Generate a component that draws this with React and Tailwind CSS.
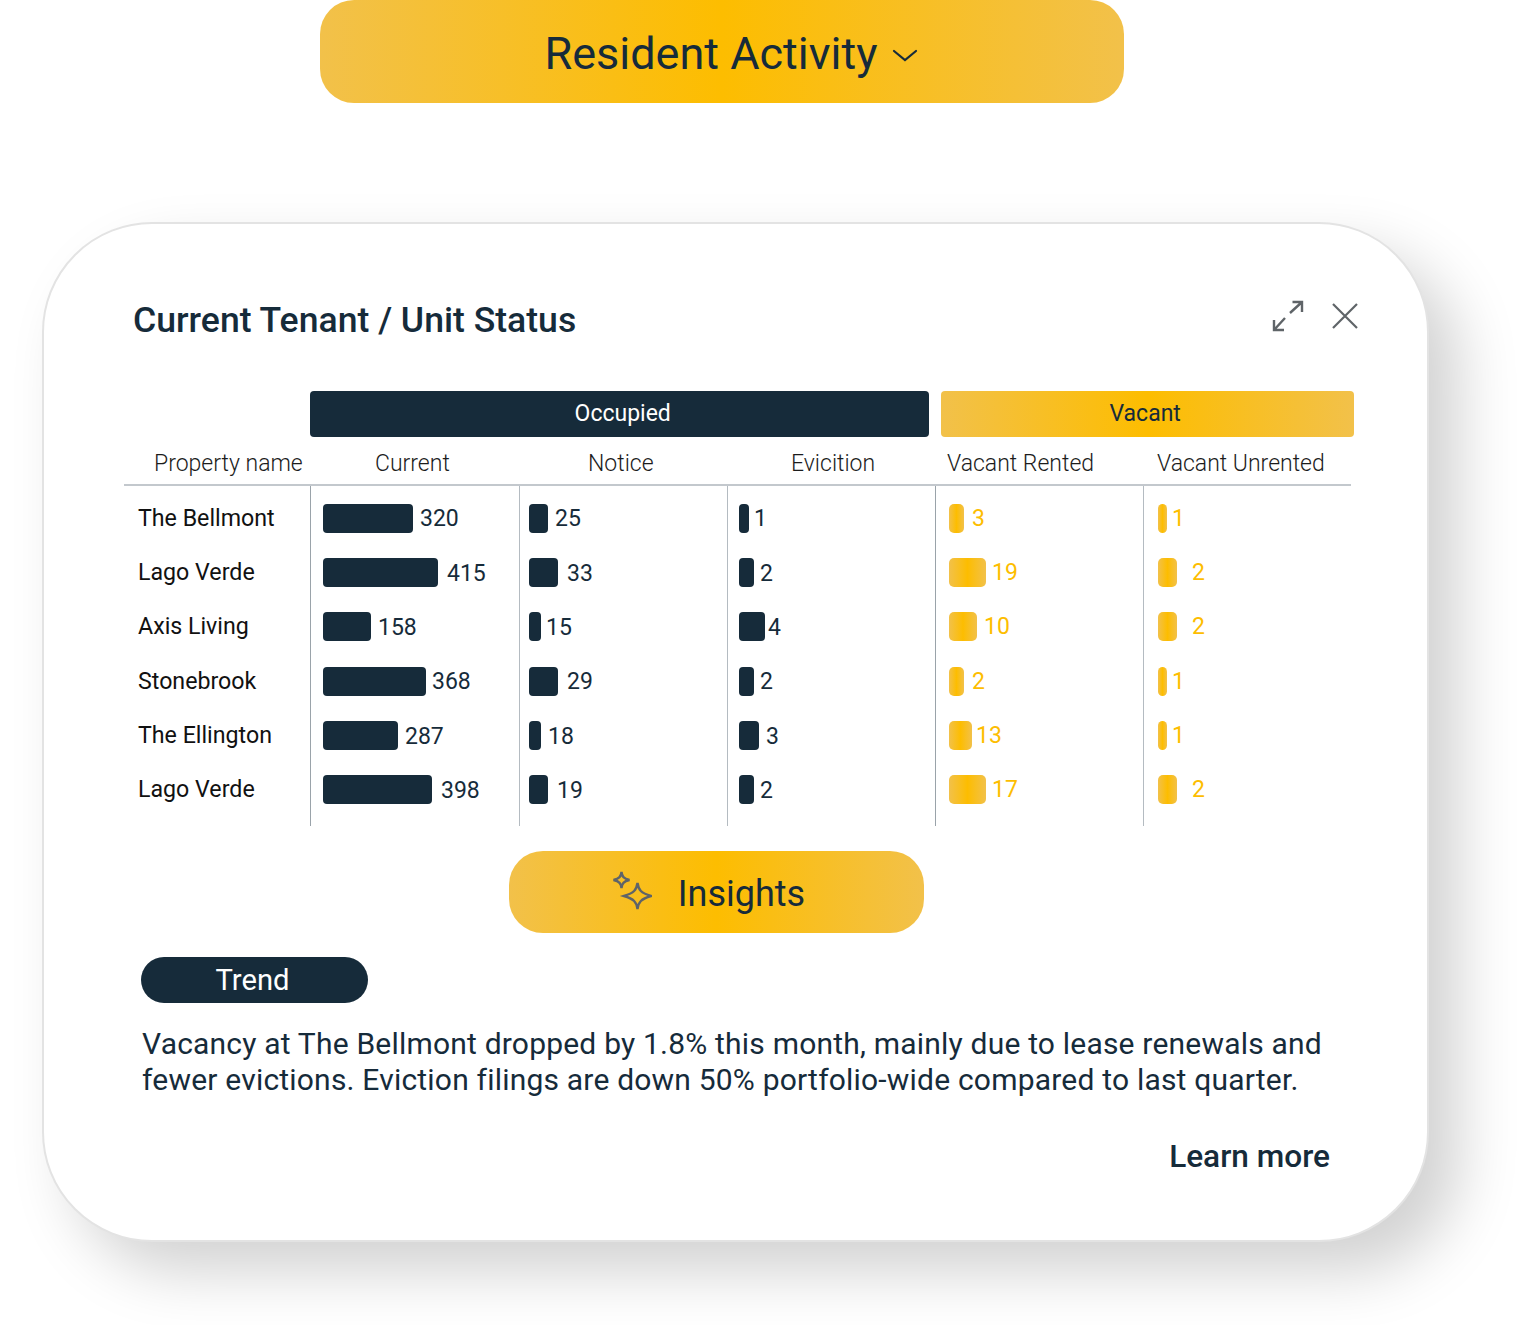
import React from 'react'

const names = ['The Bellmont', 'Lago Verde', 'Axis Living', 'Stonebrook', 'The Ellington', 'Lago Verde']

// [value, bar width, gap before the number]
const columns = [
  { pad: 'pl-[12px]', border: 'border-[#9aa3aa]', yellow: false, rows: [[320, 90, 7], [415, 115, 9], [158, 48, 7], [368, 103, 6], [287, 75, 7], [398, 109, 9]] },
  { pad: 'pl-[9px]', border: 'border-[#b4bbc1]', yellow: false, rows: [[25, 19, 7], [33, 29, 9], [15, 12, 5], [29, 29, 9], [18, 12, 7], [19, 19, 9]] },
  { pad: 'pl-[11px]', border: 'border-[#b4bbc1]', yellow: false, rows: [[1, 10, 5], [2, 15, 6], [4, 26, 3], [2, 15, 6], [3, 20, 7], [2, 15, 6]] },
  { pad: 'pl-[13px]', border: 'border-[#9aa3aa]', yellow: true, rows: [[3, 15, 8], [19, 37, 6], [10, 28, 7], [2, 15, 8], [13, 23, 4], [17, 37, 6]] },
  { pad: 'pl-[14px]', border: 'border-[#b4bbc1]', yellow: true, rows: [[1, 9, 5], [2, 19, 15], [2, 19, 15], [1, 9, 5], [1, 9, 5], [2, 19, 15]] },
]

const gold = 'bg-[linear-gradient(90deg,#f2c14a,#fdbd00_50%,#f2c14a)]'
const grid = 'grid grid-cols-[186px_209px_208px_208px_208px_208px]'

const Cell = ({ value, width, gap, yellow }) => (
  <div className="flex h-[54.3px] items-center">
    <div
      className={yellow ? `h-[29px] rounded-[5px] ${gold}` : 'h-[29px] rounded-[4px] bg-[#162b3a]'}
      style={{ width }}
    />
    <span className={yellow ? 'mt-[2px] text-[#fdbd00]' : 'mt-[3px] text-[#162b3a]'} style={{ marginLeft: gap }}>{value}</span>
  </div>
)

const Expand = () => (
  <svg width="32" height="32" viewBox="0 0 32 32" fill="none" stroke="#5f6468" strokeWidth="2.4">
    <path d="M18 13 L30 2 M20.5 2 H30 V12" />
    <path d="M13 18 L2 30 M2 20 V30 H12" />
  </svg>
)

const Close = () => (
  <svg width="28" height="28" viewBox="0 0 28 28" fill="none" stroke="#5f6468" strokeWidth="2.2">
    <path d="M2 2 L26 26 M26 2 L2 26" />
  </svg>
)

const Sparkles = () => (
  <svg width="40" height="40" viewBox="0 0 40 40" fill="none" stroke="#5f6468" strokeWidth="2.4" strokeLinecap="round">
    <path d="M9.5 1 C10 5.5 11.5 7.6 17.5 9 C11.5 10.4 10 12.5 9.5 17 C9 12.5 7.5 10.4 1.5 9 C7.5 7.6 9 5.5 9.5 1 Z" />
    <path d="M25.5 12 C26.5 19 29 22 39 25 C29 28 26.5 31 25.5 38 C24.5 31 22 28 12 25 C22 22 24.5 19 25.5 12 Z" />
  </svg>
)

export default function App() {
  return (
    <div className="h-[1325px] w-[1518px] overflow-hidden bg-white font-['Roboto',sans-serif] text-[#162b3a]">
      <button className={`ml-[320px] flex h-[103px] w-[804px] items-center justify-center rounded-[34px] pl-[18px] pt-[4px] text-[45px] ${gold}`}>
        <span>Resident Activity</span>
        <svg className="ml-[14px] mt-[4px]" width="26" height="14" viewBox="0 0 26 14" fill="none" stroke="#162b3a" strokeWidth="2.2" strokeLinecap="round">
          <path d="M2 2 L13 11 L24 2" />
        </svg>
      </button>

      <div className="ml-[42px] mt-[119px] h-[1020px] w-[1387px] rounded-[110px] border-2 border-[#e3e3e3] bg-white shadow-[30px_30px_60px_rgba(0,0,0,0.18)]">
        <div className="flex h-[167px] items-start justify-between pl-[89px] pr-[68px] pt-[72px]">
          <h2 className="text-[35.6px] font-medium leading-[48px]">Current Tenant / Unit Status</h2>
          <div className="flex items-center gap-[27px] pt-[4px]">
            <Expand />
            <Close />
          </div>
        </div>

        <div className="ml-[80px] w-[1227px] text-[23px]">
          <div className="flex w-[1230px] gap-[12px] pl-[186px] leading-[46px]">
            <div className="h-[46px] w-[620px] rounded-[4px] bg-[#162b3a] pl-[6px] text-center text-white">Occupied</div>
            <div className={`h-[46px] w-[413px] rounded-[4px] pr-[5px] text-center ${gold}`}>Vacant</div>
          </div>

          <div className={`${grid} h-[49px] items-center border-b-2 border-[#c3c8cd] pt-[1px] font-light leading-[52px] text-[#1c1c1c]`}>
            <div className="pl-[30px]">Property name</div>
            <div className="pl-[65px]">Current</div>
            <div className="pl-[69px]">Notice</div>
            <div className="pl-[64px]">Evicition</div>
            <div className="pl-[12px]">Vacant Rented</div>
            <div className="pl-[14px]">Vacant Unrented</div>
          </div>

          <div className={grid}>
            <div className="pb-[9px] pl-[14px] pt-[5px] text-[23.2px] text-[#111]">
              {names.map((name, i) => (
                <div key={i} className="flex h-[54.3px] items-center">{name}</div>
              ))}
            </div>
            {columns.map((col, i) => (
              <div key={i} className={`border-l ${col.border} pb-[9px] pt-[5px] ${col.pad}`}>
                {col.rows.map(([value, width, gap], j) => (
                  <Cell key={j} value={value} width={width} gap={gap} yellow={col.yellow} />
                ))}
              </div>
            ))}
          </div>
        </div>

        <button className={`ml-[465px] mt-[25px] flex h-[82px] w-[415px] items-center justify-center rounded-[34px] pr-[16px] pt-[5px] text-[36px] ${gold}`}>
          <span className="mb-[7px] mr-[26px]"><Sparkles /></span>
          <span>Insights</span>
        </button>

        <div className="ml-[97px] mt-[24px] flex h-[46px] w-[227px] items-center justify-center rounded-[23px] bg-[#162b3a] pr-[4px] pt-[2px] text-[29.2px] text-white">Trend</div>

        <p className="ml-[98px] mt-[23px] w-[1240px] text-[30px] leading-[36px] tracking-[0.2px]">
          Vacancy at The Bellmont dropped by 1.8% this month, mainly due to lease renewals and fewer evictions. Eviction filings are down 50% portfolio-wide compared to last quarter.
        </p>

        <div className="mt-[38px] pr-[97px] text-right text-[31.6px] font-medium leading-[42px]">Learn more</div>
      </div>
    </div>
  )
}
